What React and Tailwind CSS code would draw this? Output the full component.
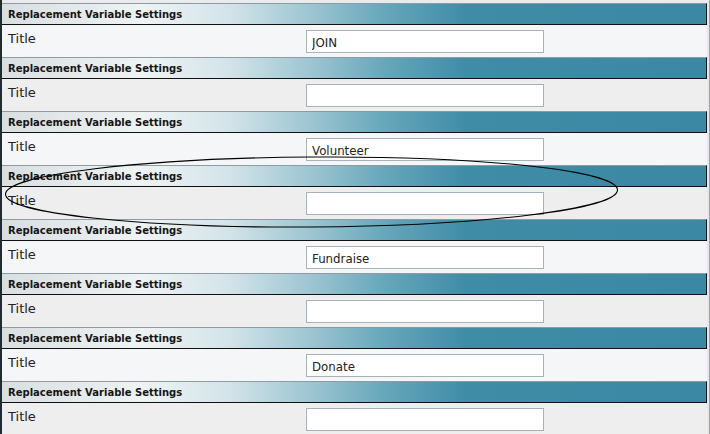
import React from 'react';

const values = ['JOIN', '', 'Volunteer', '', 'Fundraise', '', 'Donate', ''];

function Block({ value, odd }) {
    return (
        <div>
            <div className="h-[22px] border-t border-[#8c9ca2] border-b border-b-[#111] border-r border-r-[#111] bg-[linear-gradient(to_right,#d9dfe1_0%,#eef3f4_20%,#d3e4e9_32%,#9cc5d1_44%,#64a5ba_55%,#3f8ca7_66%,#3a88a3_100%)] flex items-center pl-[6px] pt-[1px]">
                <span className="text-[10px] font-bold text-[#151515]">
                    Replacement Variable Settings
                </span>
            </div>
            <div className={`h-[32px] flex items-start ${odd ? 'bg-[#f5f6f7]' : 'bg-[#eeeeee]'}`}>
                <div className="w-[304px] pl-[6px] pt-[5px] text-[13px] text-[#222] leading-[18px]">Title</div>
                <input
                    readOnly
                    value={value}
                    className="mt-[5px] w-[238px] h-[23px] bg-white border border-[#a6b2b8] px-[5px] pt-[2px] text-[11.8px] text-[#222] outline-none font-['DejaVu_Sans',sans-serif]"
                />
            </div>
        </div>
    );
}

export default function App() {
    return (
        <div className="w-[710px] h-[434px] overflow-hidden bg-[#eceeef] flex font-['DejaVu_Sans',sans-serif] relative">
            <div className="w-[707px] border-l-2 border-l-[#1f2d33]">
                <div className="h-[3px] bg-[#e9ebec]" />
                {values.map((v, i) => (
                    <Block key={i} value={v} odd={i % 2 === 0} />
                ))}
            </div>
            <div className="flex-1 bg-[#e4e8ea] border-r border-r-[#9aa6ab]" />

            {/* hand-drawn highlight */}
            <svg className="absolute left-0 top-0 pointer-events-none" width="710" height="434">
                <ellipse cx="311.5" cy="192" rx="306" ry="35" fill="none" stroke="#000" strokeWidth="1.1" transform="rotate(-0.4 311.5 192)" />
            </svg>
        </div>
    );
}
